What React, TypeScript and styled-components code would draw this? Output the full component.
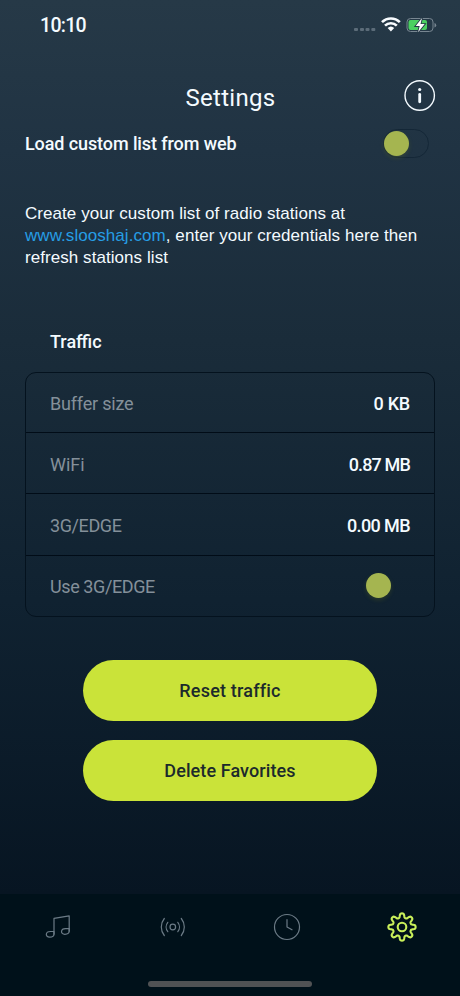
import React from "react";
import styled, { createGlobalStyle } from "styled-components";

const GlobalStyle = createGlobalStyle`
  * { box-sizing: border-box; }
  body { margin: 0; background: #00111a; }
  button { border: 0; padding: 0; background: none; font: inherit; color: inherit; }
  h1, h2 { margin: 0; }
  svg { display: block; }
`;

const Screen = styled.div`
  width: 460px;
  height: 996px;
  display: flex;
  flex-direction: column;
  overflow: hidden;
  color: #f4fbff;
  font-family: Roboto, "Liberation Sans", sans-serif;
  background: linear-gradient(180deg, #263947 0, #203343 150px, #1a2c3a 340px, #102231 600px, #071522 894px);
`;

const StatusBar = styled.header`
  height: 50px;
  flex: none;
  display: flex;
  align-items: center;
  justify-content: space-between;
  padding: 0 23px 0 40px;
`;

const Text = styled.span<{ $size?: number; $weight?: number; $track?: number }>`
  font-size: ${(p) => p.$size ?? 18}px;
  font-weight: ${(p) => p.$weight ?? 400};
  letter-spacing: ${(p) => p.$track ?? 0}px;
  line-height: 24px;
  white-space: nowrap;
`;

const Clock = styled(Text)`
  padding-top: 2px;
`;

const TitleBar = styled.div`
  height: 70px;
  flex: none;
  display: grid;
  grid-template-columns: 1fr auto 1fr;
  align-items: center;
  padding: 21px 24px 0 25px;
`;

const Title = styled(Text)`
  margin-top: 4px;
`;

const InfoButton = styled.button`
  height: 32px;
  margin-top: 1px;
  justify-self: end;
  display: flex;
`;

const SettingRow = styled.div`
  height: 46px;
  flex: none;
  display: flex;
  align-items: center;
  justify-content: space-between;
  padding: 1px 31px 0 25px;
`;

const Toggle = styled.button<{ $outlined?: boolean }>`
  width: 46px;
  height: 29px;
  display: flex;
  align-items: center;
  border-radius: 15px;
  border: 1px solid ${(p) => (p.$outlined ? "#142737" : "transparent")};
`;

const Knob = styled.span`
  width: 25px;
  height: 25px;
  border-radius: 50%;
  background: #a5b550;
  box-shadow: 0 2px 4px rgba(100, 112, 30, 0.3);
`;

const Hint = styled.p`
  margin: 37px 25px 0;
  height: 65px;
  font: 17px/22px "Liberation Sans", sans-serif;
  letter-spacing: 0.06px;
  white-space: nowrap;
`;

const Link = styled.span`
  color: #269de4;
`;

const SectionTitle = styled.h2`
  margin: 60px 0 0 50px;
  height: 44px;
  line-height: 24px;
  font-weight: 500;
`;

const Card = styled.section`
  margin: 0 25px;
  flex: none;
  border: 1px solid #04121e;
  border-radius: 11px;
`;

const CardRow = styled.div`
  height: 59px;
  display: flex;
  align-items: center;
  justify-content: space-between;
  padding: 2px 24px 0;
  & + & {
    height: 61.25px;
    padding-top: 3px;
    border-top: 1px solid #010c17;
  }
`;

const RowLabel = styled(Text)`
  color: #84909a;
`;

const ToggleSlot = styled.div`
  width: 45px;
  display: flex;
  margin-bottom: 3px;
`;

const Actions = styled.div`
  display: flex;
  flex-direction: column;
  align-items: center;
  gap: 19px;
  margin-top: 43px;
`;

const PillButton = styled.button`
  width: 294px;
  height: 61px;
  padding-top: 2px;
  border-radius: 31px;
  background: #cae339;
  color: #1c2a2c;
`;

const TabBar = styled.nav`
  height: 102px;
  flex: none;
  margin-top: auto;
  display: flex;
  flex-direction: column;
  align-items: center;
  background: #00111a;
`;

const Tabs = styled.div`
  width: 100%;
  height: 66px;
  display: grid;
  grid-template-columns: repeat(4, 1fr);
  justify-items: center;
  align-items: center;
  padding-right: 1px;
`;

const Tab = styled.button<{ $active?: boolean }>`
  color: ${(p) => (p.$active ? "#c9f05a" : "#6b7b86")};
`;

const HomeIndicator = styled.div`
  width: 164px;
  height: 6px;
  margin-top: 21px;
  border-radius: 3px;
  background: #505254;
`;

const gearOutline =
  Array.from({ length: 192 }, (_, i) => {
    const a = (i / 192) * Math.PI * 2;
    const r = 11.5 + (2.1 * Math.tanh(1.7 * Math.cos(8 * a))) / Math.tanh(1.7);
    return `${i ? "L" : "M"}${(16 + r * Math.sin(a)).toFixed(2)} ${(16 - r * Math.cos(a)).toFixed(2)}`;
  }).join("") + "Z";

const StatusGlyphs = () => (
  <svg width="84" height="20" viewBox="0 0 84 20">
    <g fill="#5c6c79">
      <rect x="1" y="13" width="4" height="3" rx="1" />
      <rect x="7" y="13" width="4" height="3" rx="1" />
      <rect x="12.500" y="13" width="4" height="3" rx="1" />
      <rect x="18.300" y="13" width="4" height="3" rx="1" />
    </g>
    <g fill="none" stroke="#f8fcff" strokeWidth="2.600">
      <path d="M29 7.200a12.500 12.500 0 0 1 17.800 0" />
      <path d="M32 10.700a8.200 8.200 0 0 1 11.800 0" />
    </g>
    <path d="M34.600 13.100a4.800 4.800 0 0 1 6.600 0L37.900 16.500z" fill="#f8fcff" />
    <rect x="54" y="3.500" width="26" height="13" rx="3.500" fill="none" stroke="#788691" />
    <path d="M81.500 8v4.500q1.700-.6 1.700-2.250T81.500 8z" fill="#788691" />
    <rect x="55.500" y="5" width="18.500" height="10" rx="2" fill="#4bd061" />
    <path d="M69 3l-6.300 8h4l-1.600 6.300 6.600-8.200h-4.200z" fill="#fff" stroke="#263947" strokeWidth="1.800" paintOrder="stroke" />
  </svg>
);

const InfoIcon = () => (
  <svg width="32" height="32" viewBox="0 0 32 32">
    <circle cx="15.700" cy="15.500" r="14.700" fill="none" stroke="#f4fbff" strokeWidth="1.400" />
    <circle cx="15.700" cy="9.500" r="1.600" fill="#f4fbff" />
    <rect x="14.300" y="13" width="2.800" height="10.200" rx="1.400" fill="#f4fbff" />
  </svg>
);

const Icon = ({ children, width = 1.2 }: { children: React.ReactNode; width?: number }) => (
  <svg width="32" height="32" viewBox="0 0 32 32" fill="none" stroke="currentColor" strokeWidth={width} strokeLinecap="round" strokeLinejoin="round">
    {children}
  </svg>
);

const rows = [
  { label: "Buffer size", value: "0 KB", labelTrack: -0.2, track: -0.25 },
  { label: "WiFi", value: "0.87 MB", labelTrack: 0, track: -0.85 },
  { label: "3G/EDGE", value: "0.00 MB", labelTrack: -0.4, track: -0.6 },
];

export default function App() {
  return (
    <Screen>
      <GlobalStyle />
      <StatusBar>
        <Clock $size={19.5} $weight={500} $track={-0.7}>10:10</Clock>
        <StatusGlyphs />
      </StatusBar>
      <TitleBar>
        <span />
        <Title as="h1" $size={24} $track={0.3}>Settings</Title>
        <InfoButton aria-label="Information"><InfoIcon /></InfoButton>
      </TitleBar>
      <SettingRow>
        <Text $weight={500} $track={-0.1}>Load custom list from web</Text>
        <Toggle $outlined aria-label="Load custom list from web"><Knob /></Toggle>
      </SettingRow>
      <Hint>
        Create your custom list of radio stations at<br />
        <Link>www.slooshaj.com</Link>, enter your credentials here then<br />
        refresh stations list
      </Hint>
      <SectionTitle><Text $weight={500}>Traffic</Text></SectionTitle>
      <Card>
        {rows.map((r) => (
          <CardRow key={r.label}>
            <RowLabel $track={r.labelTrack}>{r.label}</RowLabel>
            <Text $weight={500} $track={r.track}>{r.value}</Text>
          </CardRow>
        ))}
        <CardRow>
          <RowLabel $track={-0.4}>Use 3G/EDGE</RowLabel>
          <ToggleSlot><Toggle aria-label="Use 3G/EDGE"><Knob /></Toggle></ToggleSlot>
        </CardRow>
      </Card>
      <Actions>
        <PillButton><Text $weight={500} $track={0.2}>Reset traffic</Text></PillButton>
        <PillButton><Text $weight={500} $track={0.1}>Delete Favorites</Text></PillButton>
      </Actions>
      <TabBar>
        <Tabs>
          <Tab aria-label="Music">
            <Icon>
              <path d="M13 23.200V7.300L28.200 4.800v15.400" />
              <path d="M13 20.500H9.400c-5.300 0-5.300 5.600-.8 5.600 2.700 0 4.400-1.200 4.400-3.200zM28.200 17.700h-3.600c-5.300 0-5.300 5.600-.8 5.600 2.700 0 4.400-1.200 4.400-3.200z" />
            </Icon>
          </Tab>
          <Tab aria-label="Radio">
            <Icon>
              <g transform="translate(.8 0)">
                <circle cx="16" cy="16" r="2.800" />
                <path d="M11 11.300a7.500 7.500 0 0 0 0 9.400M21 11.300a7.500 7.500 0 0 1 0 9.400M7.500 7.500a13.500 13.500 0 0 0 0 17M24.500 7.500a13.500 13.500 0 0 1 0 17" />
              </g>
            </Icon>
          </Tab>
          <Tab aria-label="History">
            <Icon>
              <circle cx="16" cy="16" r="12.500" />
              <path d="M16 8.500V16l5 2.800" />
            </Icon>
          </Tab>
          <Tab aria-label="Settings" $active>
            <Icon width={2.1}>
              <path d={gearOutline} />
              <circle cx="16" cy="16" r="4.300" />
            </Icon>
          </Tab>
        </Tabs>
        <HomeIndicator />
      </TabBar>
    </Screen>
  );
}
